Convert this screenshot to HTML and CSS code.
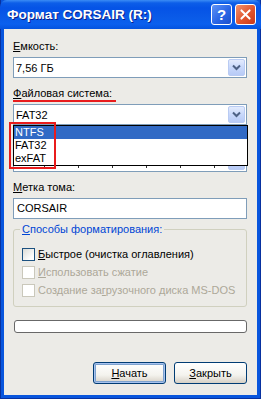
FILE: index.html
```html
<!DOCTYPE html>
<html lang="ru">
<head>
<meta charset="utf-8">
<title>Формат CORSAIR (R:)</title>
<link rel="stylesheet" href="styles.css">
</head>
<body>
<div class="window">
  <div class="titlebar">
    <span class="title">Формат CORSAIR (R:)</span>
    <div class="caption-buttons">
      <span class="cap-btn help">?</span>
      <span class="cap-btn close">
        <svg width="21" height="21" viewBox="0 0 21 21"><path d="M6 6 L15 15 M15 6 L6 15" stroke="#fff" stroke-width="2.2" stroke-linecap="round"/></svg>
      </span>
    </div>
  </div>
  <div class="client">
    <div class="label"><u>Е</u>мкость:</div>
    <div class="combo">
      <span class="combo-text">7,56 ГБ</span>
      <span class="combo-btn"><svg width="15" height="17" viewBox="0 0 15 17"><path d="M4 6.5 L7.5 10 L11 6.5" fill="none" stroke="#4d6185" stroke-width="2"/></svg></span>
    </div>

    <div class="label gap"><u>Ф</u>айловая система:</div>
    <div class="combo-wrap">
      <div class="combo">
        <span class="combo-text">FAT32</span>
        <span class="combo-btn"><svg width="15" height="17" viewBox="0 0 15 17"><path d="M4 6.5 L7.5 10 L11 6.5" fill="none" stroke="#4d6185" stroke-width="2"/></svg></span>
      </div>
      <div class="dropdown">
        <div class="item selected">NTFS</div>
        <div class="item">FAT32</div>
        <div class="item">exFAT</div>
      </div>
    </div>

    <div class="label gap"></div>
    <div class="combo">
      <span class="ticks"><i></i><i></i><i></i><i></i><i></i><i></i></span>
      <span class="combo-btn"><svg width="15" height="17" viewBox="0 0 15 17"><path d="M4 6.5 L7.5 10 L11 6.5" fill="none" stroke="#4d6185" stroke-width="2"/></svg></span>
    </div>

    <div class="label gap"><u>М</u>етка тома:</div>
    <div class="textbox">CORSAIR</div>

    <div class="group">
      <span class="group-title"><u>С</u>пособы форматирования:</span>
      <div class="check-row"><span class="check"></span><span><u>Б</u>ыстрое (очистка оглавления)</span></div>
      <div class="check-row disabled"><span class="check"></span><span><u>И</u>спользовать сжатие</span></div>
      <div class="check-row disabled"><span class="check"></span><span>Создание за<u>г</u>рузочного диска MS-DOS</span></div>
    </div>

    <div class="progress"></div>

    <div class="buttons">
      <span class="btn default"><u>Н</u>ачать</span>
      <span class="btn"><u>З</u>акрыть</span>
    </div>

    <span class="mark-underline"></span>
    <span class="mark-box"></span>
  </div>
</div>
</body>
</html>
```
FILE: styles.css
```css
* { box-sizing: border-box; }
html, body { margin: 0; padding: 0; background: #fff; }
body {
  font-family: "Liberation Sans", Arial, sans-serif;
  font-size: 11px;
  color: #000;
}
u { text-decoration: underline; text-underline-offset: 1px; }

.window {
  width: 261px;
  height: 399px;
  background: #0855dd;
  border: 1px solid #0831a0;
  border-top: none;
  display: flex;
  flex-direction: column;
}

.titlebar {
  height: 29px;
  margin: 0 -1px;
  display: flex;
  align-items: center;
  justify-content: space-between;
  padding: 0 5px 0 7px;
  background: linear-gradient(to bottom, #3b8cf5 0, #0d5ee8 3px, #0553e6 8px, #0a5be8 18px, #0b60ee 24px, #0453df 29px);
  border-radius: 7px 7px 0 0;
}
.title {
  color: #fff;
  font-weight: bold;
  font-size: 13.5px;
  text-shadow: 1px 1px 0 #0a1e88;
}
.caption-buttons { display: flex; gap: 3px; }
.cap-btn {
  width: 21px;
  height: 21px;
  border: 1px solid #fff;
  border-radius: 3px;
  display: flex;
  align-items: center;
  justify-content: center;
}
.help {
  background: linear-gradient(135deg, #5f93f5 0, #2a66e6 55%, #1b4fcc 100%);
  color: #fff;
  font-weight: bold;
  font-size: 15px;
}
.close {
  background: linear-gradient(135deg, #f2936e 0, #e0542d 55%, #c9391a 100%);
}

.client {
  position: relative;
  flex: 1;
  margin: 0 3px 3px 3px;
  background: #ecebe7;
  padding: 11px 10px 0 9px;
}

.label { height: 13px; line-height: 13px; margin-bottom: 4px; white-space: nowrap; }
.label.gap { margin-top: 9px; }

.combo-wrap { position: relative; z-index: 2; }
.combo {
  height: 21px;
  background: #fff;
  border: 1px solid #7f9db9;
  display: flex;
  align-items: center;
  justify-content: space-between;
  padding: 1px 1px 1px 2px;
}
.combo-text { white-space: nowrap; overflow: hidden; }
.combo-btn {
  width: 17px;
  height: 17px;
  border: 1px solid #b9cbf3;
  border-radius: 2px;
  background: linear-gradient(to bottom, #e3ebfd 0, #c8d8fb 50%, #b7caf6 100%);
  display: flex;
  align-items: center;
  justify-content: center;
}
.ticks {
  align-self: flex-end;
  display: flex;
  gap: 33px;
  padding: 0 0 2px 28px;
}
.ticks i { display: block; width: 1px; height: 4px; background: #333; }

.dropdown {
  position: absolute;
  top: 100%;
  left: 0;
  width: 235px;
  height: 41px;
  background: #fff;
  border: 1px solid #000;
  z-index: 3;
}
.item { height: 13px; line-height: 13px; padding-left: 1px; }
.item.selected { background: #316ac5; color: #fff; }

.textbox {
  height: 21px;
  background: #fff;
  border: 1px solid #7f9db9;
  line-height: 19px;
  padding-left: 3px;
}

.group {
  margin-top: 10px;
  border: 1px solid #d0d0bf;
  border-radius: 3px;
  padding: 0 0 9px 8px;
  display: flex;
  flex-direction: column;
  gap: 5px;
}
.group-title {
  align-self: flex-start;
  margin: -7px 0 7px -2px;
  padding: 0 2px;
  background: #ecebe7;
  color: #0046d5;
  line-height: 13px;
}
.check-row { display: flex; align-items: center; gap: 3px; height: 13px; line-height: 13px; white-space: nowrap; }
.check {
  width: 13px;
  height: 13px;
  flex: none;
  border: 1px solid #1c5180;
  background: linear-gradient(135deg, #dcdcd7 0, #fff 80%);
}
.check-row.disabled { color: #aca899; }
.check-row.disabled .check { border-color: #cac8bb; background: #fff; }

.progress {
  margin: 13px 0 0 1px;
  width: 233px;
  height: 13px;
  border: 1px solid #686868;
  border-radius: 3px;
  background: #fff;
}

.buttons {
  margin-top: 29px;
  display: flex;
  justify-content: flex-end;
  gap: 8px;
}
.btn {
  width: 73px;
  height: 22px;
  border: 1px solid #003c74;
  border-radius: 3px;
  background: linear-gradient(to bottom, #fff 0, #f4f3ee 60%, #d6d0c5 100%);
  display: flex;
  align-items: center;
  justify-content: center;
}
.btn.default {
  box-shadow: inset 0 0 0 1px #a8c3f0, inset 0 0 0 2px #7da2ce;
}

.mark-underline {
  position: absolute;
  left: 9px;
  top: 71px;
  width: 103px;
  height: 2px;
  background: #e81c1c;
}
.mark-box {
  position: absolute;
  left: 5px;
  top: 93px;
  width: 47px;
  height: 47px;
  border: 2px solid #e81c1c;
  z-index: 5;
}
```
